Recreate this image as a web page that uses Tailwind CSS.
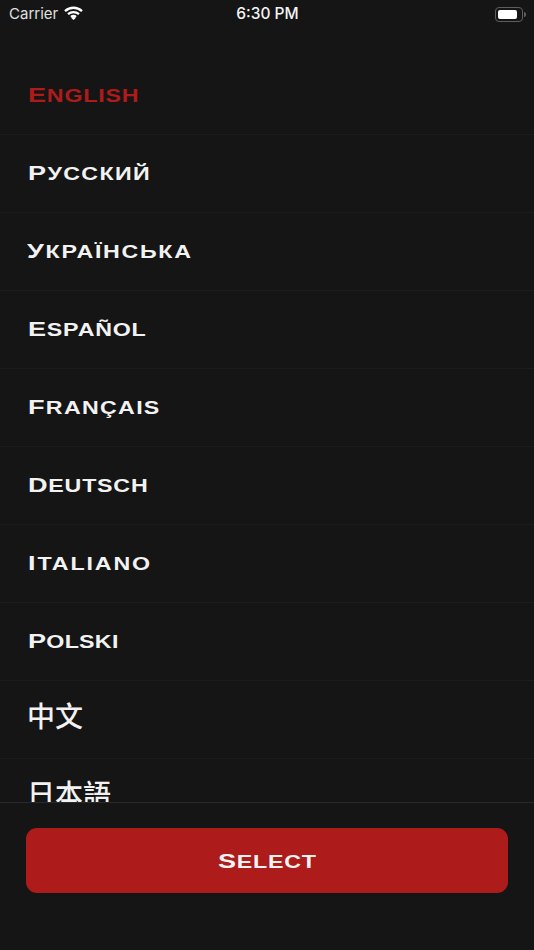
<!doctype html>
<html><head><meta charset="utf-8"><script src="https://cdn.jsdelivr.net/npm/@tailwindcss/browser@4"></script></head>
<body class="bg-[#151515]">
<div class="w-[534px] h-[950px] overflow-hidden flex flex-col bg-[#151515] text-[#f2f2f2] font-['Liberation_Sans',sans-serif]">
  <div class="h-[57px] shrink-0">
    <div class="h-[28px] grid grid-cols-3 items-center pl-[9px] pr-[8px]">
      <div class="flex items-center gap-[6px] text-[15px] text-[#e0e0e0] font-['Inter',sans-serif]">
        <span>Carrier</span>
        <svg width="19" height="14" viewBox="0 0 19 14" fill="none" stroke="#fff" stroke-width="2.3" class="-mt-[3px]"><path d="M1 5.2C6 .6 13 .6 18 5.2"/><path d="M4 8.2c3.2-2.8 7.8-2.8 11 0"/><path d="M7 11c1.5-1.2 3.5-1.2 5 0"/><path fill="#fff" stroke="none" d="M9.5 10.4l2.2 1.6-2.2 2-2.2-2z"/></svg>
      </div>
      <div class="text-center text-[15.5px] font-medium font-['Inter',sans-serif] text-[#f4f4f4]">6:30 PM</div>
      <div class="flex items-center justify-end">
        <div class="w-[28px] h-[15px] rounded-[4px] border border-[#5e5e5e] p-[2px]"><div class="w-[19px] h-full rounded-[2px] bg-white"></div></div>
        <div class="w-[1.5px] h-[5px] bg-[#5e5e5e] ml-[1px] rounded-r"></div>
      </div>
    </div>
  </div>
  <div class="h-[745px] shrink-0 overflow-hidden">
    <div class="h-[78px] flex items-center px-[28px] pb-[2px] border-b border-[#1b1b1b]"><span class="text-[#ad1b1b] inline-block origin-left scale-x-[1.29] uppercase font-bold text-[18px] first-letter:text-[21px] tracking-[0.6px]">English</span></div>
    <div class="h-[78px] flex items-center px-[28px] pb-[2px] border-b border-[#1b1b1b]"><span class="inline-block origin-left scale-x-[1.29] uppercase font-bold text-[18px] first-letter:text-[21px] tracking-[1.05px]">Русский</span></div>
    <div class="h-[78px] flex items-center pl-[27px] pr-[28px] pb-[2px] border-b border-[#1b1b1b]"><span class="inline-block origin-left scale-x-[1.29] uppercase font-bold text-[18px] first-letter:text-[21px] tracking-[1.3px]">Українська</span></div>
    <div class="h-[78px] flex items-center px-[28px] pb-[2px] border-b border-[#1b1b1b]"><span class="inline-block origin-left scale-x-[1.29] uppercase font-bold text-[18px] first-letter:text-[21px] tracking-[0.6px]">Español</span></div>
    <div class="h-[78px] flex items-center px-[28px] pb-[2px] border-b border-[#1b1b1b]"><span class="inline-block origin-left scale-x-[1.29] uppercase font-bold text-[18px] first-letter:text-[21px] tracking-[1px]">Français</span></div>
    <div class="h-[78px] flex items-center px-[28px] pb-[2px] border-b border-[#1b1b1b]"><span class="inline-block origin-left scale-x-[1.29] uppercase font-bold text-[18px] first-letter:text-[21px] tracking-[0.6px]">Deutsch</span></div>
    <div class="h-[78px] flex items-center px-[28px] pb-[2px] border-b border-[#1b1b1b]"><span class="inline-block origin-left scale-x-[1.29] uppercase font-bold text-[18px] first-letter:text-[21px] tracking-[1.45px]">Italiano</span></div>
    <div class="h-[78px] flex items-center px-[28px] pb-[2px] border-b border-[#1b1b1b]"><span class="inline-block origin-left scale-x-[1.29] uppercase font-bold text-[18px] first-letter:text-[21px] tracking-[0.2px]">Polski</span></div>
    <div class="h-[78px] flex items-center pl-[27px] pb-[10px] border-b border-[#1b1b1b] text-[28px] font-medium font-['Noto_Sans_CJK_TC',sans-serif]">中文</div>
    <div class="h-[78px] flex items-center pl-[27px] pb-[10px] text-[28px] font-medium font-['Noto_Sans_CJK_TC',sans-serif]">日本語</div>
  </div>
  <div class="flex-1 border-t border-[#2a2a2a] px-[26px] pt-[25px]">
    <button class="w-[482px] h-[65px] rounded-[11px] bg-[#ad1b1b] flex items-center justify-center"><span class="inline-block scale-x-[1.29] uppercase font-bold text-[18px] first-letter:text-[21px] tracking-[0.6px]">Select</span></button>
  </div>
</div>
</body></html>
